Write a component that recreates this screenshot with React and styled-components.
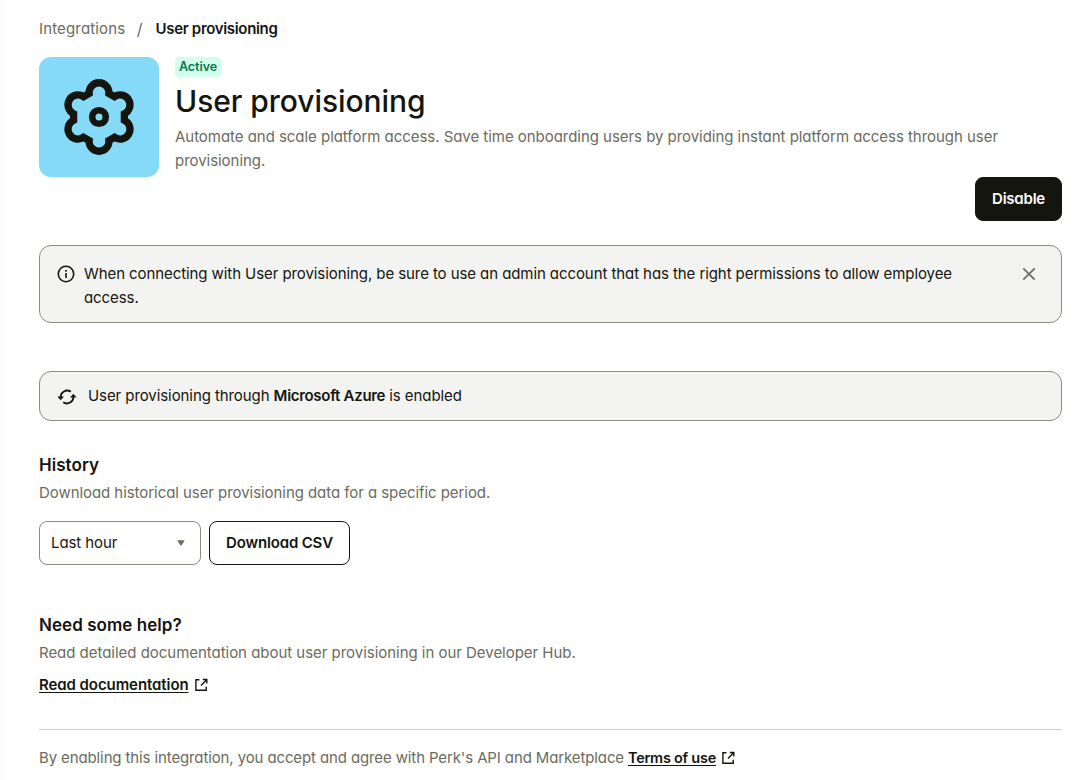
import React, { useState } from 'react';
import { createGlobalStyle, styled } from 'styled-components';

const GlobalStyle = createGlobalStyle`
	* {
		box-sizing: border-box;
	}
	body {
		margin: 0;
		background-color: #fff;
		color: #14150f;
		font-family: Inter, 'Liberation Sans', sans-serif;
		font-size: 15px;
		line-height: 24px;
		font-feature-settings: 'cv11';
	}
	h1, h2, p {
		margin: 0;
	}
	svg {
		display: block;
		flex: none;
	}
`;

const Page = styled.main`
	height: 780px;
	margin-left: 2px;
	padding: 17px 26px 0 36px;
	border-left: 1px solid #fafafa;
	overflow: hidden;
`;

const Breadcrumb = styled.nav`
	display: flex;
	color: #6b6b60;
`;

const Crumb = styled.a`
	letter-spacing: 0.15px;
`;

const Separator = styled.span`
	margin: 0 13px 0 11.5px;
	font-size: 16px;
`;

const CurrentCrumb = styled.span`
	color: #14150f;
	font-weight: 600;
	letter-spacing: -0.32px;
`;

const Header = styled.header`
	display: flex;
	gap: 16px;
	margin-top: 16px;
`;

const Logo = styled.div`
	display: flex;
	flex: none;
	align-items: center;
	justify-content: center;
	width: 120px;
	height: 120px;
	border-radius: 12px;
	background-color: #85daf8;
`;

const Badge = styled.span`
	display: block;
	width: fit-content;
	padding: 0 4px;
	border-radius: 4px;
	background-color: #d3fdec;
	color: #007a4d;
	font-weight: 600;
	font-size: 12.5px;
	line-height: 20px;
	letter-spacing: -0.05px;
`;

const Title = styled.h1`
	margin: 4px 0 4px;
	font-weight: 550;
	font-size: 30px;
	line-height: 40px;
	letter-spacing: -0.06px;
`;

const Text = styled.p`
	color: #6b6b60;
	letter-spacing: ${({ $spacing }) => $spacing || 0}px;
`;

const Actions = styled.div`
	display: flex;
	justify-content: flex-end;
`;

const Button = styled.button`
	height: 44px;
	padding: 0 16px;
	border: 1px solid #14150f;
	border-radius: 8px;
	background-color: ${({ $primary }) => ($primary ? '#14150f' : '#fff')};
	color: ${({ $primary }) => ($primary ? '#fff' : '#14150f')};
	font: inherit;
	font-weight: 600;
	font-feature-settings: 'cv11';
	letter-spacing: ${({ $primary }) => ($primary ? -0.22 : -0.15)}px;
	white-space: nowrap;
	cursor: pointer;
`;

const Notice = styled.div`
	display: flex;
	gap: 9px;
	margin-top: 24px;
	padding: 16px 24px 12px 17px;
	border: 1px solid #8b8c7d;
	border-radius: 12px;
	background-color: #f3f3f1;

	> svg {
		margin-top: 3px;
	}
`;

const NoticeText = styled.p`
	flex: 1;
	padding-right: 48px;
	letter-spacing: -0.08px;
`;

const CloseButton = styled.button`
	align-self: flex-start;
	margin-top: 4px;
	padding: 0;
	border: none;
	background: none;
	cursor: pointer;
`;

const Status = styled(Notice)`
	gap: 11px;
	align-items: center;
	margin-top: 48px;
	padding: 12px 17px;

	> svg {
		margin-top: 2px;
	}

	strong {
		font-weight: 600;
		letter-spacing: -0.3px;
	}
`;

const Section = styled.section`
	margin-top: ${({ $top }) => $top}px;
`;

const SectionTitle = styled.h2`
	margin-bottom: 4px;
	font-weight: 600;
	font-size: 17px;
	line-height: 24px;
	letter-spacing: 0.05px;
`;

const Controls = styled.div`
	display: flex;
	gap: 8px;
	margin-top: 16px;
`;

const Select = styled.div`
	display: flex;
	align-items: center;
	justify-content: space-between;
	width: 162px;
	height: 44px;
	padding: 0 15px 0 11px;
	border: 1px solid #8b8c7d;
	border-radius: 8px;
	letter-spacing: -0.08px;
`;

const LinkRow = styled.div`
	display: flex;
	align-items: center;
	gap: 6px;
	margin-top: 8px;
`;

const Link = styled.a`
	font-weight: 600;
	font-size: ${({ $size }) => $size || 15}px;
	letter-spacing: ${({ $spacing }) => $spacing}px;
	text-decoration: underline;
	text-decoration-skip-ink: none;
	text-decoration-thickness: 1px;
	text-underline-offset: 2px;
	cursor: pointer;
`;

const Footer = styled.footer`
	display: flex;
	align-items: center;
	margin-top: 32px;
	padding-top: 16px;
	border-top: 1px solid #cfcfc7;

	> a {
		margin: 0 6px 0 4px;
	}
`;

const lobe = 'A9.9 9.9 0 1 1';
const flower = `M-9.87 -23.6${lobe} 9.87 -23.6L15.5 -20.35${lobe} 25.37 -3.25V3.25${lobe} 15.5 20.35L9.87 23.6${lobe} -9.87 23.6L-15.5 20.35${lobe} -25.37 3.25V-3.25${lobe} -15.5 -20.35Z`;

const FlowerIcon = () => (
	<svg width="80" height="80" viewBox="-40 -40 80 80" fill="none" stroke="#14150f">
		<path d={flower} strokeWidth="7.3" />
		<circle r="6.8" strokeWidth="6.6" />
	</svg>
);

const InfoIcon = () => (
	<svg width="18" height="18" viewBox="0 0 18 18" fill="none" stroke="#14150f" strokeWidth="1.6">
		<circle cx="9" cy="9" r="7.7" />
		<path d="M9 8v5M9 5v1.7" />
	</svg>
);

const SyncIcon = () => (
	<svg width="20" height="18" viewBox="0 0 20 18" fill="none" stroke="#14150f" strokeWidth="1.8">
		<path d="M3.7 9.5A6.4 6.4 0 0 1 13.8 3.8M16.3 8.5A6.4 6.4 0 0 1 6.2 14.2" />
		<path d="M.4 8.6h6.6l-3.3 3.6zM19.6 9.4h-6.6l3.3-3.6z" fill="#14150f" stroke="none" />
	</svg>
);

const CloseIcon = () => (
	<svg width="16" height="16" viewBox="0 0 16 16" fill="none" stroke="#6b6b60" strokeWidth="1.7">
		<path d="M2.3 2.3l11.4 11.4M13.7 2.3L2.3 13.7" />
	</svg>
);

const CaretIcon = () => (
	<svg width="8" height="6" viewBox="0 0 8 6" fill="#6b6b60">
		<path d="M.9.3h6.2q.8 0 .3.8L4.6 5.2q-.6.8-1.2 0L.6 1.1Q.1.3.9.3z" />
	</svg>
);

const ExternalIcon = () => (
	<svg width="13" height="14" viewBox="0 0 13 14" fill="none" stroke="#14150f" strokeWidth="1.4">
		<path d="M4.4 1.8H.9v10.4h10.3V8.8" />
		<path d="M6 7.5l5.4-5.4M7.8 1.5h4v4" />
	</svg>
);

const App = () => {
	const [noticeOpen, setNoticeOpen] = useState(true);

	return (
		<Page>
			<GlobalStyle />
			<Breadcrumb>
				<Crumb>Integrations</Crumb>
				<Separator>/</Separator>
				<CurrentCrumb>User provisioning</CurrentCrumb>
			</Breadcrumb>

			<Header>
				<Logo>
					<FlowerIcon />
				</Logo>
				<div>
					<Badge>Active</Badge>
					<Title>User provisioning</Title>
					<Text $spacing={-0.04}>
						Automate and scale platform access. Save time onboarding users by providing instant platform
						access through user provisioning.
					</Text>
				</div>
			</Header>
			<Actions>
				<Button $primary>Disable</Button>
			</Actions>

			{noticeOpen && (
				<Notice>
					<InfoIcon />
					<NoticeText>
						When connecting with User provisioning, be sure to use an admin account that has the right
						permissions to allow employee access.
					</NoticeText>
					<CloseButton aria-label="Close" onClick={() => setNoticeOpen(false)}>
						<CloseIcon />
					</CloseButton>
				</Notice>
			)}

			<Status>
				<SyncIcon />
				<NoticeText>
					User provisioning through <strong>Microsoft Azure</strong> is enabled
				</NoticeText>
			</Status>

			<Section $top={32}>
				<SectionTitle>History</SectionTitle>
				<Text $spacing={-0.06}>Download historical user provisioning data for a specific period.</Text>
				<Controls>
					<Select>
						Last hour
						<CaretIcon />
					</Select>
					<Button>Download CSV</Button>
				</Controls>
			</Section>

			<Section $top={48}>
				<SectionTitle>Need some help?</SectionTitle>
				<Text $spacing={-0.03}>
					Read detailed documentation about user provisioning in our Developer Hub.
				</Text>
				<LinkRow>
					<Link $spacing={-0.08}>Read documentation</Link>
					<ExternalIcon />
				</LinkRow>
			</Section>

			<Footer>
				<Text $spacing={-0.12}>
					By enabling this integration, you accept and agree with Perk's API and Marketplace
				</Text>
				<Link $size={14.5} $spacing={-0.26}>
					Terms of use
				</Link>
				<ExternalIcon />
			</Footer>
		</Page>
	);
};

export default App;
